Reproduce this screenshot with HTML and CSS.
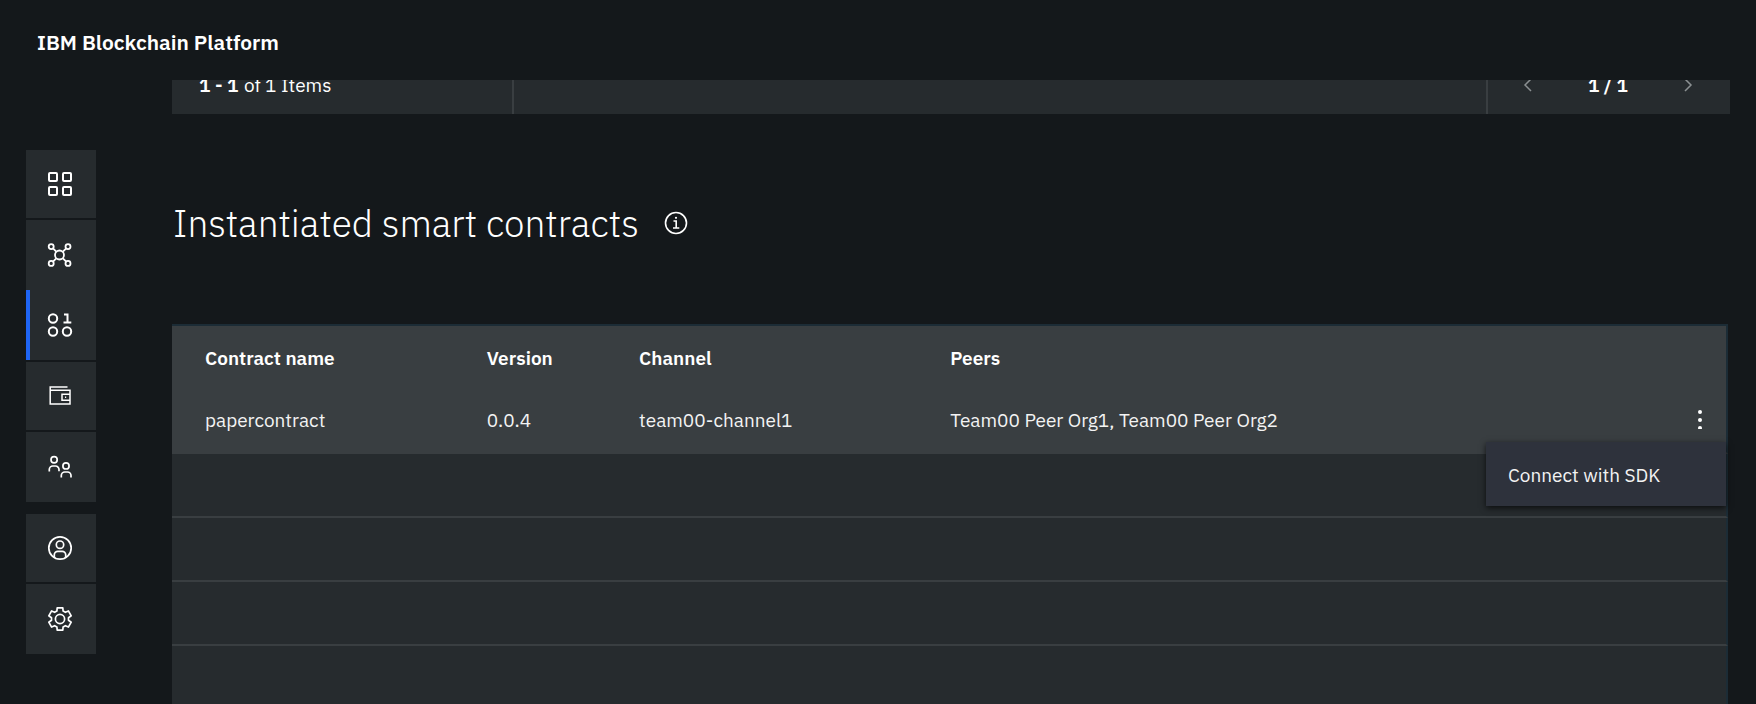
FILE: index.html
```html
<!DOCTYPE html>
<html lang="en">
<head>
<meta charset="utf-8">
<title>IBM Blockchain Platform</title>
<link rel="stylesheet" href="styles.css">
</head>
<body>
<header class="topbar"><span class="brand">IBM Blockchain Platform</span></header>
<div class="shell">
  <nav class="sidenav" aria-label="Main">
    <a class="nav-item divided" href="#" aria-label="Nodes">
      <svg class="icon" viewBox="1 0 32 32" stroke-width="2"><rect x="5" y="5" width="8" height="8" rx="1"/><rect x="19" y="5" width="8" height="8" rx="1"/><rect x="5" y="19" width="8" height="8" rx="1"/><rect x="19" y="19" width="8" height="8" rx="1"/></svg>
    </a>
    <a class="nav-item" href="#" aria-label="Channels">
      <svg class="icon" viewBox="1 0 32 32" stroke-width="1.800"><circle cx="15.500" cy="16" r="4.500"/><circle cx="7.200" cy="7.600" r="2.500"/><circle cx="24" cy="7.600" r="2.500"/><circle cx="7.200" cy="24.400" r="2.500"/><circle cx="24" cy="24.400" r="2.500"/><path d="M9 9.400l3.300 3.300M22.200 9.400l-3.300 3.300M9 22.600l3.300-3.300M22.200 22.600l-3.300-3.300"/></svg>
    </a>
    <a class="nav-item divided active" href="#" aria-label="Smart contracts" aria-current="page">
      <svg class="icon" viewBox="1 0 32 32" stroke-width="2"><circle cx="9" cy="9.500" r="4.200"/><circle cx="9" cy="22.500" r="4.200"/><circle cx="23" cy="22.500" r="4.200"/><path d="M20 5.500h3.500V14M19.500 13.500h7.800"/></svg>
    </a>
    <a class="nav-item divided" href="#" aria-label="Wallet">
      <svg class="icon" viewBox="1 0 32 32" stroke-width="1.500"><path d="M23.500 6.900H6.200V24H26V10.300H6.200M26 14.200h-8v6h8"/><path d="M21 17.200h1.200"/></svg>
    </a>
    <a class="nav-item" href="#" aria-label="Organizations">
      <svg class="icon" viewBox="1 0 32 32" stroke-width="1.700"><circle cx="10.100" cy="8.800" r="3.100"/><path d="M5.300 20.500v-2a3.500 3.500 0 0 1 3.500-3.500h2.700a3.500 3.500 0 0 1 3.500 3.500v1.700"/><circle cx="22" cy="14.900" r="3.100"/><path d="M17.300 26.500v-2a3.500 3.500 0 0 1 3.500-3.500h2.700a3.500 3.500 0 0 1 3.500 3.500v2"/></svg>
    </a>
    <a class="nav-item divided group" href="#" aria-label="Users">
      <svg class="icon" viewBox="1 0 32 32" stroke-width="1.700"><circle cx="16" cy="16" r="11.200"/><circle cx="16" cy="12.700" r="3.700"/><path d="M10.300 25.500v-2.700a3.500 3.500 0 0 1 3.500-3.500h4.400a3.500 3.500 0 0 1 3.500 3.500v2.700"/></svg>
    </a>
    <a class="nav-item" href="#" aria-label="Settings">
      <svg class="icon" viewBox="1 0 32 32" stroke-width="1.700" stroke-linejoin="round"><circle cx="16" cy="16" r="4.600"/><path d="M13.200 4.800h5.600l.3 3.200 2.300 1.300 3-1.400 2.800 4.900-2.700 1.900v2.600l2.700 1.900-2.800 4.900-3-1.400-2.300 1.300-.3 3.200h-5.600l-.3-3.200-2.300-1.300-3 1.400-2.800-4.900 2.700-1.900v-2.600l-2.700-1.900 2.800-4.900 3 1.400 2.300-1.300z"/></svg>
    </a>
  </nav>
  <main class="content">
    <div class="pagination">
      <p class="range"><strong>1 - 1</strong> of 1 Items</p>
      <div class="pager">
        <button class="page-btn" type="button" aria-label="Previous page"><svg width="10" height="16" viewBox="0 0 10 16"><path d="M8 2 2 8l6 6"/></svg></button>
        <strong>1 / 1</strong>
        <button class="page-btn" type="button" aria-label="Next page"><svg width="10" height="16" viewBox="0 0 10 16"><path d="m2 2 6 6-6 6"/></svg></button>
      </div>
    </div>
    <div class="section-head">
      <h1>Instantiated smart contracts</h1>
      <button class="info" type="button" aria-label="More information"><svg width="24" height="24" viewBox="0 0 24 24"><circle cx="12" cy="12" r="10.500"/><path d="M9.500 10h2.700v7M9 17h6.300"/><circle class="dot" cx="12" cy="6.800" r="1.100"/></svg></button>
    </div>
    <table class="contracts">
      <colgroup><col class="c-name"><col class="c-version"><col class="c-channel"><col><col class="c-menu"></colgroup>
      <thead><tr><th>Contract name</th><th>Version</th><th>Channel</th><th>Peers</th><th></th></tr></thead>
      <tbody>
        <tr class="open">
          <td>papercontract</td><td>0.0.4</td><td>team00-channel1</td><td>Team00 Peer Org1, Team00 Peer Org2</td>
          <td class="menu-cell">
            <button class="kebab" type="button" aria-label="Actions" aria-expanded="true"><svg width="4" height="19" viewBox="0 0 4 19"><circle cx="2" cy="2" r="2"/><circle cx="2" cy="10" r="2"/><circle cx="2" cy="18" r="2"/></svg></button>
            <div class="menu"><button class="menu-item" type="button">Connect with SDK</button></div>
          </td>
        </tr>
        <tr><td colspan="5"></td></tr>
        <tr><td colspan="5"></td></tr>
        <tr><td colspan="5"></td></tr>
        <tr><td colspan="5"></td></tr>
      </tbody>
    </table>
  </main>
</div>
</body>
</html>
```
FILE: styles.css
```css
* { box-sizing: border-box; }
body {
  margin: 0;
  height: 100vh;
  display: flex;
  flex-direction: column;
  overflow: hidden;
  background: #14181b;
  color: #fff;
  font: 19px/24px "IBM Plex Sans", Roboto, sans-serif;
}
button { border: 0; padding: 0; background: none; color: inherit; font: inherit; }
p, h1 { margin: 0; }
svg { display: block; fill: none; stroke: #fff; }

.topbar { flex: none; height: 80px; padding: 0 37px; display: flex; align-items: center; }
.brand { font-size: 21px; line-height: 28px; font-weight: 600; padding-top: 4px; }

.shell { flex: 1; min-height: 0; display: flex; }

.sidenav { flex: none; width: 172px; padding: 70px 0 0 26px; }
.nav-item {
  display: flex;
  align-items: center;
  justify-content: center;
  width: 70px;
  height: 70px;
  background: #262b2e;
}
.nav-item.divided { height: 68px; margin-bottom: 2px; }
.nav-item.active { height: 70px; box-shadow: inset 4px 0 #1f65f5; }
.nav-item.group { margin-top: 12px; }
.icon { width: 32px; height: 32px; }

.content { flex: 1; min-width: 0; overflow: hidden; padding-right: 28px; }

.pagination {
  display: flex;
  height: 58px;
  margin: -24px -2px 0 0;
  background: #262b2e;
}
.range {
  width: 342px;
  padding: 17px 27px;
  border-right: 2px solid #393e41;
}
.range strong { margin-right: 1px; }
.pager {
  width: 244px;
  margin-left: auto;
  padding: 0 37px 0 35px;
  display: flex;
  align-items: center;
  justify-content: space-between;
  border-left: 2px solid #393e41;
}
.page-btn svg { stroke: #8b9092; stroke-width: 1.5; }
strong { font-weight: 600; }

.section-head { display: flex; align-items: center; gap: 25px; padding: 84px 0 76px 1px; }
h1 { font-size: 37px; line-height: 50px; font-weight: 300; }
.info svg { stroke-width: 1.6; }
.info .dot { fill: #fff; stroke: none; }

.contracts {
  width: 100%;
  table-layout: fixed;
  border-spacing: 0;
  border-top: 2px solid #1c2c36;
}
.c-name { width: 18.1%; }
.c-version { width: 9.8%; }
.c-channel { width: 20%; }
.c-menu { width: 90px; }
th, td { padding: 0 0 0 33px; text-align: left; white-space: nowrap; }
th { height: 62px; padding-top: 2px; background: #393e41; font-weight: 600; }
td { height: 64px; background: #262b2e; border-bottom: 2px solid #393e41; }
th:last-child, td:last-child { border-right: 2px solid #1c2c36; }
.open td { height: 66px; background: #393e41; color: #f3f3f3; }

.menu-cell { position: relative; }
.open .menu-cell { padding-bottom: 2px; }
.kebab { display: block; margin: 0 24px 0 auto; }
.kebab svg { fill: #fff; stroke: none; }
.menu {
  position: absolute;
  z-index: 1;
  top: 54px;
  right: 0;
  width: 240px;
  background: #2e323c;
  box-shadow: 0 2px 6px rgba(0, 0, 0, 0.7);
}
.menu-item { display: block; width: 100%; padding: 21px 22px 19px; text-align: left; }
```
